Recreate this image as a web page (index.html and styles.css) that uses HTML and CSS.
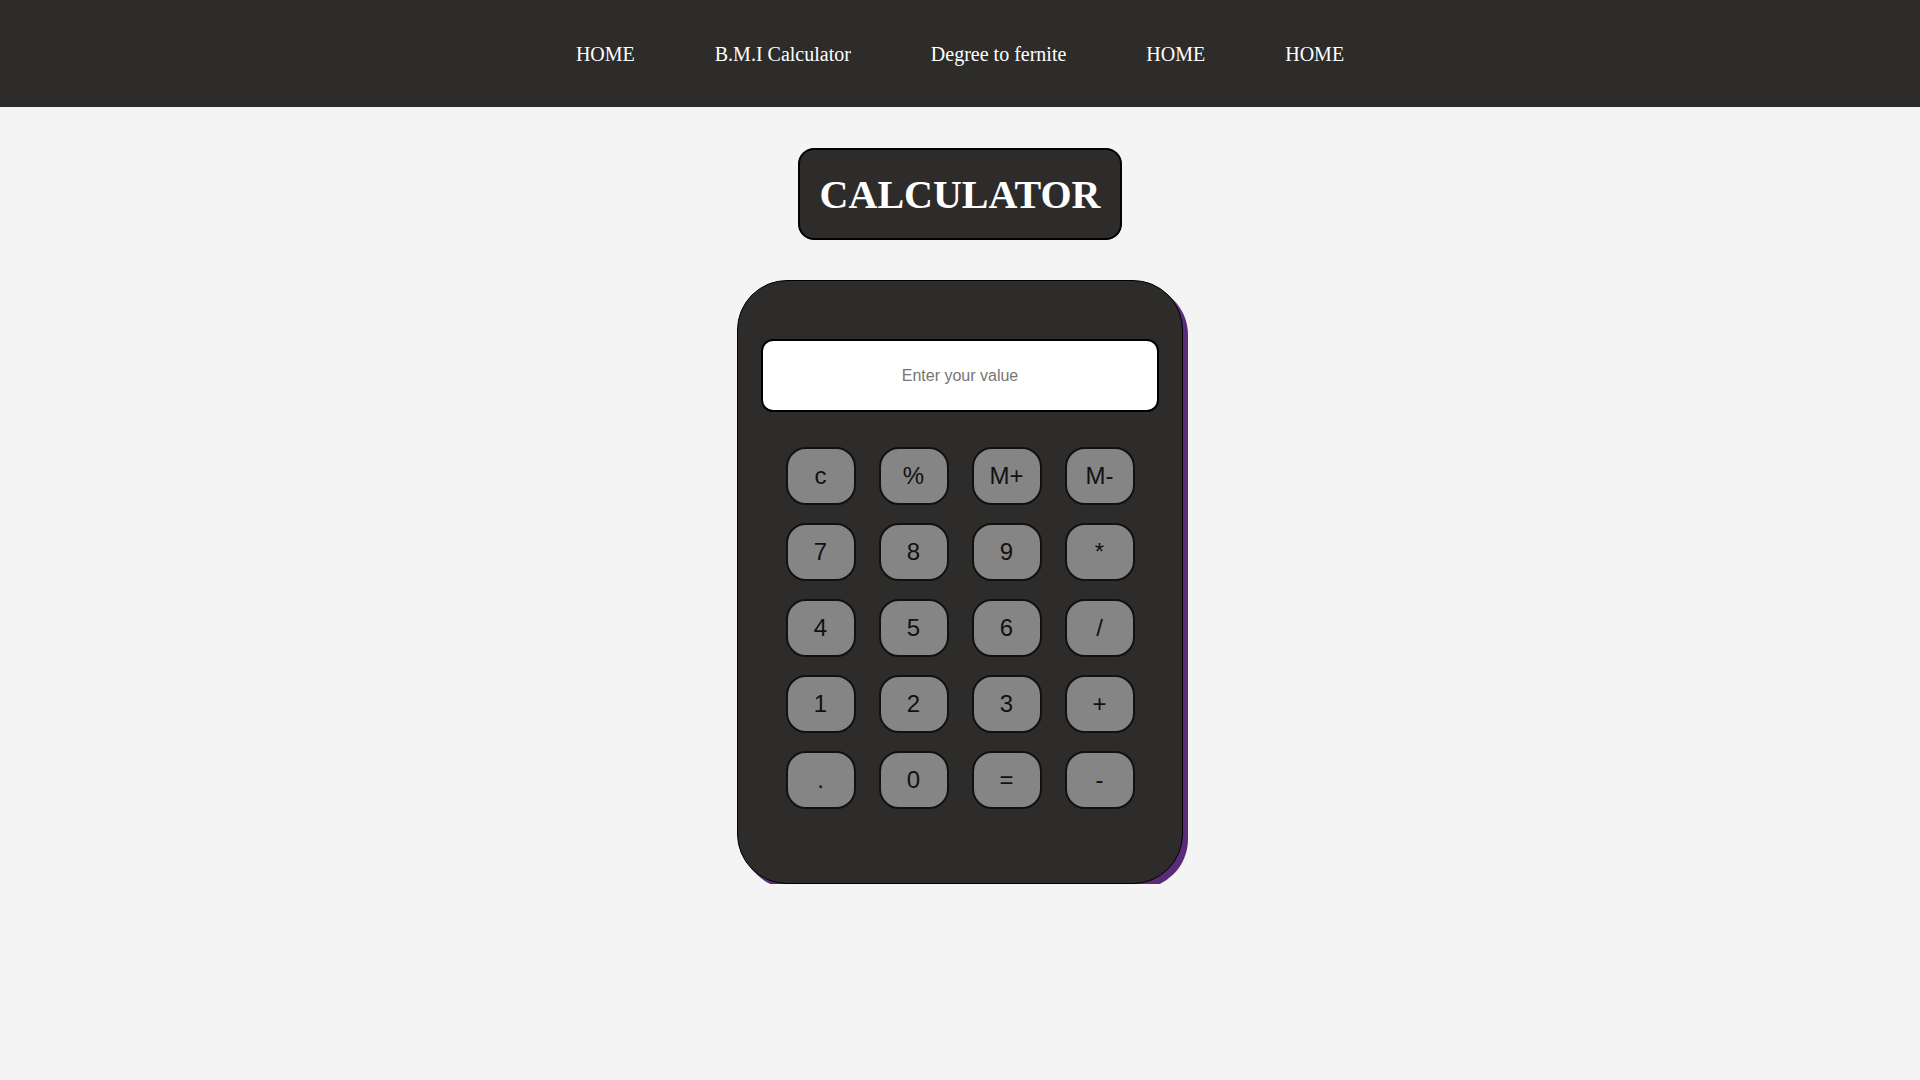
FILE: index.html
```html
<!DOCTYPE html>
<html lang="en">
<head>
<meta charset="utf-8">
<title>Calculator</title>
<link rel="stylesheet" href="styles.css">
</head>
<body>
<nav class="nav">
  <a class="nav-link" href="#">HOME</a>
  <a class="nav-link" href="#">B.M.I Calculator</a>
  <a class="nav-link" href="#">Degree to fernite</a>
  <a class="nav-link" href="#">HOME</a>
  <a class="nav-link" href="#">HOME</a>
</nav>
<main class="main">
  <h1 class="title">CALCULATOR</h1>
  <div class="calc">
    <input class="display" type="text" placeholder="Enter your value">
    <div class="keys">
      <button class="key">c</button>
      <button class="key">%</button>
      <button class="key">M+</button>
      <button class="key">M-</button>
      <button class="key">7</button>
      <button class="key">8</button>
      <button class="key">9</button>
      <button class="key">*</button>
      <button class="key">4</button>
      <button class="key">5</button>
      <button class="key">6</button>
      <button class="key">/</button>
      <button class="key">1</button>
      <button class="key">2</button>
      <button class="key">3</button>
      <button class="key">+</button>
      <button class="key">.</button>
      <button class="key">0</button>
      <button class="key">=</button>
      <button class="key">-</button>
    </div>
  </div>
</main>
</body>
</html>
```
FILE: styles.css
```css
* { box-sizing: border-box; }
body {
  margin: 0;
  background: #f4f4f4;
  font-family: "Liberation Serif", "Times New Roman", serif;
}
.nav {
  height: 107px;
  padding-top: 2px;
  background: #2d2c2a;
  display: flex;
  justify-content: center;
  align-items: center;
  gap: 80px;
}
.nav-link {
  color: #ffffff;
  text-decoration: none;
  font-size: 20px;
  line-height: 23px;
}
.main {
  display: flex;
  flex-direction: column;
  align-items: center;
}
.title {
  margin: 41px 0 0;
  padding: 22px 20px 20px;
  background: #2d2c2a;
  color: #ffffff;
  border: 2px solid #000;
  border-radius: 16px;
  font-family: "Liberation Serif", "Times New Roman", serif;
  font-size: 40px;
  font-weight: bold;
  line-height: 46px;
}
.calc {
  margin-top: 40px;
  width: 446px;
  background: #2d2c2a;
  border: 1px solid #000;
  border-radius: 50px;
  box-shadow: 5px 5px 0 #5a2b79;
  padding: 58px 23px 74px;
}
.display {
  display: block;
  width: 100%;
  height: 73px;
  background: #ffffff;
  border: 2px solid #000;
  border-radius: 12px;
  text-align: center;
  font-family: "Liberation Sans", Arial, sans-serif;
  font-size: 16px;
  color: #222;
  outline: none;
}
.display::placeholder { color: #757575; }
.keys {
  margin-top: 35px;
  display: grid;
  grid-template-columns: repeat(4, 70px);
  grid-auto-rows: 58px;
  column-gap: 23px;
  row-gap: 18px;
  justify-content: center;
}
.key {
  background: #858585;
  border: 2px solid #111;
  border-radius: 20px;
  font-family: "Liberation Sans", Arial, sans-serif;
  font-size: 24px;
  color: #111;
  padding: 0;
}
```
